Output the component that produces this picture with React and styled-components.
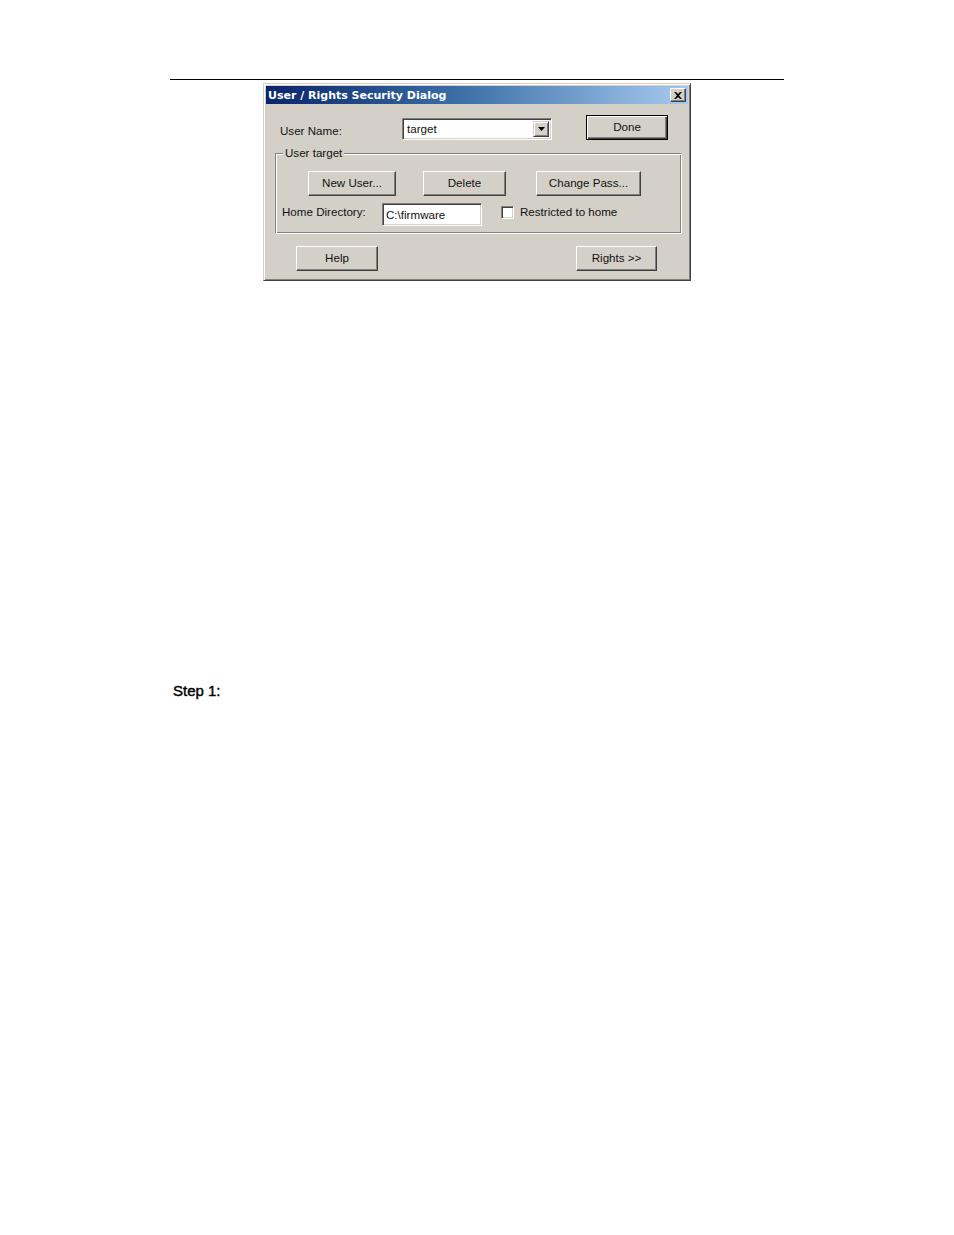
import React from "react";
import styled, { createGlobalStyle, css } from "styled-components";

const Global = createGlobalStyle`
  html, body { margin: 0; padding: 0; background: #fff; }
  body { width: 954px; min-height: 1235px; font-family: "Liberation Sans", Arial, sans-serif; }
`;

const Page = styled.div`
  width: 954px;
  height: 1235px;
  padding-top: 79px;
  box-sizing: border-box;
`;

const Rule = styled.div`
  margin: 0 170px;
  height: 1px;
  background: #000;
`;

const Dialog = styled.div`
  margin: 3px 0 0 263px;
  width: 428px;
  height: 198px;
  box-sizing: border-box;
  background: #d4d0c8;
  border: 1px solid;
  border-color: #d4d0c8 #404040 #404040 #d4d0c8;
  box-shadow: inset 1px 1px #ffffff, inset -1px -1px #808080;
  padding: 2px;
  display: flex;
  flex-direction: column;
  font-family: "Liberation Sans", Arial, sans-serif;
  font-size: 11.6px;
  color: #111;
`;

const TitleBar = styled.div`
  height: 18px;
  background: linear-gradient(to right, #0a246a 0%, #3a6ea5 45%, #a6caf0 100%);
  display: flex;
  align-items: center;
  justify-content: space-between;
  padding: 0 2px 0 2px;
`;

const TitleText = styled.span`
  color: #fff;
  font-family: "DejaVu Sans", Verdana, sans-serif;
  font-weight: bold;
  font-size: 11px;
`;

const CloseBtn = styled.div`
  width: 16px;
  height: 14px;
  box-sizing: border-box;
  background: #d4d0c8;
  border: 1px solid;
  border-color: #ffffff #404040 #404040 #ffffff;
  box-shadow: inset -1px -1px #808080;
  display: flex;
  align-items: center;
  justify-content: center;
`;

const Client = styled.div`
  display: flex;
  flex-direction: column;
  padding: 11px 0 0 0;
`;

const TopRow = styled.div`
  display: flex;
  align-items: flex-start;
  height: 25px;
`;

const Label = styled.span`
  display: inline-block;
  width: ${(p) => p.$w}px;
  padding-left: ${(p) => p.$pl || 0}px;
  box-sizing: border-box;
  line-height: ${(p) => p.$lh || 25}px;
  white-space: nowrap;
  margin-top: ${(p) => p.$mt || 0}px;
`;

const sunken = css`
  box-sizing: border-box;
  background: #fff;
  border: 1px solid;
  border-color: #808080 #ffffff #ffffff #808080;
  box-shadow: inset 1px 1px #404040, inset -1px -1px #d4d0c8;
`;

const Combo = styled.div`
  ${sunken};
  width: 150px;
  height: 22px;
  margin-top: 3px;
  display: flex;
  align-items: center;
  padding: 2px 2px 2px 4px;
`;

const ComboText = styled.span`
  flex: 1;
  line-height: 16px;
`;

const DropBtn = styled.div`
  width: 16px;
  height: 16px;
  box-sizing: border-box;
  background: #d4d0c8;
  border: 1px solid;
  border-color: #d4d0c8 #404040 #404040 #d4d0c8;
  box-shadow: inset 1px 1px #ffffff, inset -1px -1px #808080;
  display: flex;
  align-items: center;
  justify-content: center;
`;

const Button = styled.div`
  width: ${(p) => p.$w}px;
  height: 25px;
  box-sizing: border-box;
  background: #d4d0c8;
  display: flex;
  align-items: center;
  justify-content: center;
  padding-bottom: 2px;
  white-space: nowrap;
  margin-left: ${(p) => p.$ml || 0}px;
  ${(p) =>
    p.$default
      ? css`
          border: 1px solid #000;
          box-shadow: inset 1px 1px #ffffff, inset -1px -1px #404040,
            inset -2px -2px #808080;
        `
      : css`
          border: 1px solid;
          border-color: #ffffff #404040 #404040 #ffffff;
          box-shadow: inset -1px -1px #808080;
        `}
`;

const Group = styled.div`
  position: relative;
  margin: 13px 0 0 9px;
  width: 407px;
  height: 81px;
  box-sizing: border-box;
  border: 1px solid;
  border-color: #808080 #ffffff #ffffff #808080;
  box-shadow: inset 1px 1px #ffffff, inset -1px -1px #808080;
  padding: 17px 0 0 0;
`;

const Legend = styled.span`
  position: absolute;
  top: -8px;
  left: 7px;
  padding: 0 2px;
  background: #d4d0c8;
  line-height: 14px;
`;

const ButtonRow = styled.div`
  display: flex;
  padding-left: 32px;
`;

const HomeRow = styled.div`
  display: flex;
  align-items: flex-start;
  margin-top: 7px;
  padding-left: 6px;
`;

const TextField = styled.div`
  ${sunken};
  width: 100px;
  height: 23px;
  display: flex;
  align-items: center;
  padding: 0 0 1px 3px;
`;

const Check = styled.div`
  ${sunken};
  width: 13px;
  height: 13px;
  margin: 3px 0 0 19px;
`;

const CheckLabel = styled.span`
  margin-left: 6px;
  line-height: 18px;
`;

const BottomRow = styled.div`
  display: flex;
  margin-top: 12px;
  padding-left: 30px;
`;

const Step = styled.div`
  margin: 401px 0 0 173px;
  font-family: "Liberation Sans", Arial, sans-serif;
  font-size: 15px;
  line-height: 18px;
  color: #000;
  -webkit-text-stroke: 0.4px #000;
`;

export default function App() {
  return (
    <Page>
      <Global />
      <Rule />
      <Dialog>
        <TitleBar>
          <TitleText>User / Rights Security Dialog</TitleText>
          <CloseBtn>
            <svg width="8" height="7" viewBox="0 0 8 7">
              <path d="M0 0h2l2 2 2-2h2L5 3.5 8 7H6L4 5 2 7H0l3-3.5z" fill="#000" />
            </svg>
          </CloseBtn>
        </TitleBar>
        <Client>
          <TopRow>
            <Label $w={136} $pl={14} $mt={3}>User Name:</Label>
            <Combo>
              <ComboText>target</ComboText>
              <DropBtn>
                <svg width="7" height="4" viewBox="0 0 7 4">
                  <path d="M0 0h7L3.5 4z" fill="#000" />
                </svg>
              </DropBtn>
            </Combo>
            <Button $w={82} $ml={34} $default>Done</Button>
          </TopRow>
          <Group>
            <Legend>User target</Legend>
            <ButtonRow>
              <Button $w={88}>New User...</Button>
              <Button $w={83} $ml={27}>Delete</Button>
              <Button $w={105} $ml={30}>Change Pass...</Button>
            </ButtonRow>
            <HomeRow>
              <Label $w={100} $lh={18}>Home Directory:</Label>
              <TextField>C:\firmware</TextField>
              <Check />
              <CheckLabel>Restricted to home</CheckLabel>
            </HomeRow>
          </Group>
          <BottomRow>
            <Button $w={82}>Help</Button>
            <Button $w={81} $ml={198}>Rights &gt;&gt;</Button>
          </BottomRow>
        </Client>
      </Dialog>
      <Step>Step 1:</Step>
    </Page>
  );
}
